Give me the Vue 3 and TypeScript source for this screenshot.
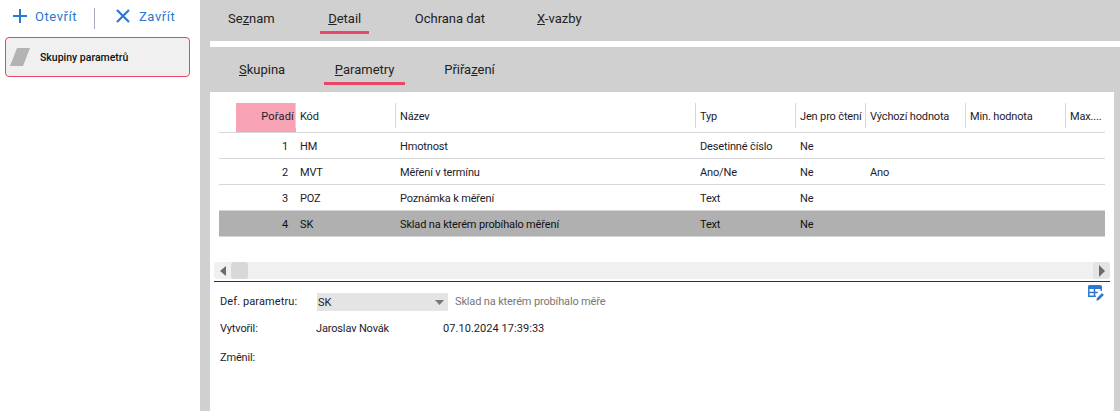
<script setup lang="ts">
const columns = ['Kód', 'Název', 'Typ', 'Jen pro čtení', 'Výchozí hodnota', 'Min. hodnota', 'Max....']
const rows = [
  { n: 1, kod: 'HM', nazev: 'Hmotnost', typ: 'Desetinné číslo', ro: 'Ne', def: '', sel: false },
  { n: 2, kod: 'MVT', nazev: 'Měření v termínu', typ: 'Ano/Ne', ro: 'Ne', def: 'Ano', sel: false },
  { n: 3, kod: 'POZ', nazev: 'Poznámka k měření', typ: 'Text', ro: 'Ne', def: '', sel: false },
  { n: 4, kod: 'SK', nazev: 'Sklad na kterém probíhalo měření', typ: 'Text', ro: 'Ne', def: '', sel: true },
]
</script>

<template>
  <div class="app">
    <aside class="side">
      <div class="toolbar">
        <button class="tool first">
          <svg width="16" height="16" viewBox="0 0 16 16"><path d="M8 1v14M1 8h14" stroke="#2a78d0" stroke-width="2" fill="none" /></svg>
          <span>Otevřít</span>
        </button>
        <i class="sep"></i>
        <button class="tool second">
          <svg width="16" height="16" viewBox="0 0 16 16"><path d="M2 2l12 12M14 2L2 14" stroke="#2a78d0" stroke-width="2.2" fill="none" /></svg>
          <span>Zavřít</span>
        </button>
      </div>
      <div class="navitem">
        <svg width="20" height="18" viewBox="0 0 20 18"><path d="M7 0h13l-7 18H0z" fill="#b3b3b3" /></svg>
        <span>Skupiny parametrů</span>
      </div>
    </aside>

    <main class="main">
      <nav class="tabs top">
        <span class="tab t1">Se<u>z</u>nam</span>
        <span class="tab t2 active"><u>D</u>etail</span>
        <span class="tab t3">Ochrana dat</span>
        <span class="tab t4"><u>X</u>-vazby</span>
      </nav>
      <div class="strip"></div>
      <nav class="tabs sub">
        <span class="tab s1"><u>S</u>kupina</span>
        <span class="tab s2 active"><u>P</u>arametry</span>
        <span class="tab s3">Přiřa<u>z</u>ení</span>
      </nav>

      <section class="panel">
        <div class="table">
          <div class="row head">
            <div class="c order"><span class="pink">Pořadí</span></div>
            <div v-for="c in columns" :key="c" class="c hcell">{{ c }}</div>
          </div>
          <div v-for="r in rows" :key="r.n" class="row body" :class="{ sel: r.sel }">
            <div class="c order num">{{ r.n }}</div>
            <div class="c">{{ r.kod }}</div>
            <div class="c">{{ r.nazev }}</div>
            <div class="c">{{ r.typ }}</div>
            <div class="c">{{ r.ro }}</div>
            <div class="c">{{ r.def }}</div>
            <div class="c"></div>
            <div class="c"></div>
          </div>
        </div>

        <div class="scroll">
          <span class="arrow"><svg width="8" height="10" viewBox="0 0 8 10"><path d="M7 0v10L1 5z" fill="#6a6a6a" /></svg></span>
          <span class="thumb"></span>
          <span class="grow"></span>
          <span class="arrow right"><svg width="8" height="12" viewBox="0 0 8 12"><path d="M1 0v12l6-6z" fill="#6a6a6a" /></svg></span>
        </div>

        <div class="form">
          <div class="editicon">
            <svg width="16" height="16" viewBox="0 0 16 16">
              <path d="M.8 3v8.200h7M6.500 3v8M.8 7.500h9M13.200 3v3" fill="none" stroke="#2a78d0" stroke-width="1.500" />
              <path d="M0 1.500A1.500 1.500 0 0 1 1.500 0h10.500a2 2 0 0 1 2 2v2H0z" fill="#2a78d0" />
              <path d="M8.300 15.700l.7-2.600 5-5 1.900 1.900-5 5z" fill="#2a78d0" />
            </svg>
          </div>
          <div class="frow r1">
            <span class="lab up wide">Def. parametru:</span>
            <span class="combo"><span>SK</span><svg width="9" height="5" viewBox="0 0 9 5"><path d="M0 0h9L4.500 5z" fill="#777" /></svg></span>
            <span class="hint up">Sklad na kterém probíhalo měře</span>
          </div>
          <div class="frow r2">
            <span class="lab">Vytvořil:</span>
            <span class="who">Jaroslav Novák</span>
            <span class="when">07.10.2024 17:39:33</span>
          </div>
          <div class="frow r3">
            <span class="lab">Změnil:</span>
          </div>
        </div>
      </section>
    </main>
  </div>
</template>

<style>
html, body { margin: 0; background: #fff; }
</style>

<style scoped>
.app {
  width: 1120px;
  height: 411px;
  display: flex;
  overflow: hidden;
  font-family: Roboto, sans-serif;
  font-size: 11px;
  letter-spacing: -0.15px;
  color: #1c1c2a;
  background: #fff;
}
.side { width: 200px; flex: none; background: #fff; }
.toolbar { height: 37px; display: flex; align-items: flex-start; padding-top: 8px; box-sizing: border-box; }
.tool {
  display: flex; align-items: center; gap: 7px; border: 0; background: none; padding: 0;
  font: inherit; font-size: 13px; letter-spacing: 0.55px; color: #2a78d0; height: 16px;
}
.tool.first { margin-left: 12px; }
.tool.second { margin-left: 20px; gap: 8px; }
.sep { width: 1px; height: 21px; background: #a9a9c0; margin-left: 17px; }
.navitem {
  margin-left: 5px; width: 185px; height: 40px; box-sizing: border-box;
  border: 1px solid #e8476a; border-radius: 4px; background: #f0f0f0;
  display: flex; align-items: center; padding-left: 4px; gap: 10px;
  font-size: 10.5px; font-weight: 500; letter-spacing: 0; color: #111;
}
.main { flex: 1; background: #d0d0d0; display: flex; flex-direction: column; padding-left: 10px; min-width: 0; }
.tabs { display: flex; background: #d0d0d0; }
.tabs.top { height: 41px; margin-left: -10px; }
.tabs.sub { height: 45px; }
.strip { height: 6px; background: #fff; }
.tab {
  font-size: 13px; letter-spacing: 0; color: #222; display: block; text-align: center; white-space: nowrap;
  box-sizing: border-box; border-bottom: 3px solid transparent;
}
.tab.active { border-bottom-color: #ea4668; }
.top .tab { height: 34px; padding-top: 10px; line-height: 18px; }
.sub .tab { height: 38px; padding-top: 14px; line-height: 18px; }
.t1 { margin-left: 28px; }
.t2 { margin-left: 45px; width: 49px; padding-left: 1px; }
.t3 { margin-left: 46px; }
.t4 { margin-left: 52px; }
.s1 { margin-left: 29px; }
.s2 { margin-left: 39px; width: 81px; }
.s3 { margin-left: 39px; }
.panel { background: #fff; flex: 1; margin-right: 6px; padding: 8px 4px 0 4px; display: flex; flex-direction: column; min-height: 0; }
.table { margin-left: 5px; width: 886px; }
.row { display: grid; grid-template-columns: 77px 100px 300px 100px 70px 100px 100px 39px; }
.head { height: 33px; border-bottom: 1px solid #d8d8d8; box-sizing: border-box; align-items: end; }
.body { height: 26px; border-bottom: 1px solid #d8d8d8; box-sizing: border-box; align-items: center; }
.body .c { padding-top: 1px; }
.body.sel { background: #b0b0b0; color: #111; }
.c { padding-left: 4px; white-space: nowrap; overflow: hidden; min-width: 0; }
.hcell { height: 25px; line-height: 27px; border-left: 1px solid #d8d8d8; margin: 0 0 4px -1px; padding-left: 4px; }
.order { padding-left: 0; text-align: right; }
.num { padding-right: 8px; }
.pink { display: block; margin-left: 17px; height: 29px; line-height: 28px; background: #f7a3b3; padding-right: 2px; letter-spacing: 0.2px; }
.scroll { margin-top: 25px; height: 17px; background: #f0f0f0; display: flex; align-items: stretch; border-radius: 3px; }
.arrow { width: 17px; display: flex; align-items: center; justify-content: center; }
.arrow.right { background: #e4e4e4; border-radius: 3px; }
.thumb { width: 17px; background: #d8d8d8; border-radius: 3px; }
.grow { flex: 1; }
.form { margin-top: 2px; border-top: 1px solid #333; position: relative; padding-left: 6px; }
.editicon { position: absolute; right: 6px; top: 3px; line-height: 0; }
.frow { display: flex; align-items: center; height: 18px; }
.up { padding-bottom: 2px; }
.lab { width: 97px; flex: none; }
.wide { letter-spacing: 0.1px; }
.combo {
  width: 131px; height: 18px; background: #e4e4e4; display: flex; align-items: center; justify-content: space-between;
  padding: 0 4px 0 1px; box-sizing: border-box; flex: none;
}
.hint { margin-left: 7px; color: #777; }
.when { letter-spacing: 0.05px; }
.r1 { margin-top: 11px; }
.r2 { margin-top: 8px; }
.r3 { margin-top: 11px; }
.who { width: 127px; flex: none; margin-left: -1px; }
</style>
